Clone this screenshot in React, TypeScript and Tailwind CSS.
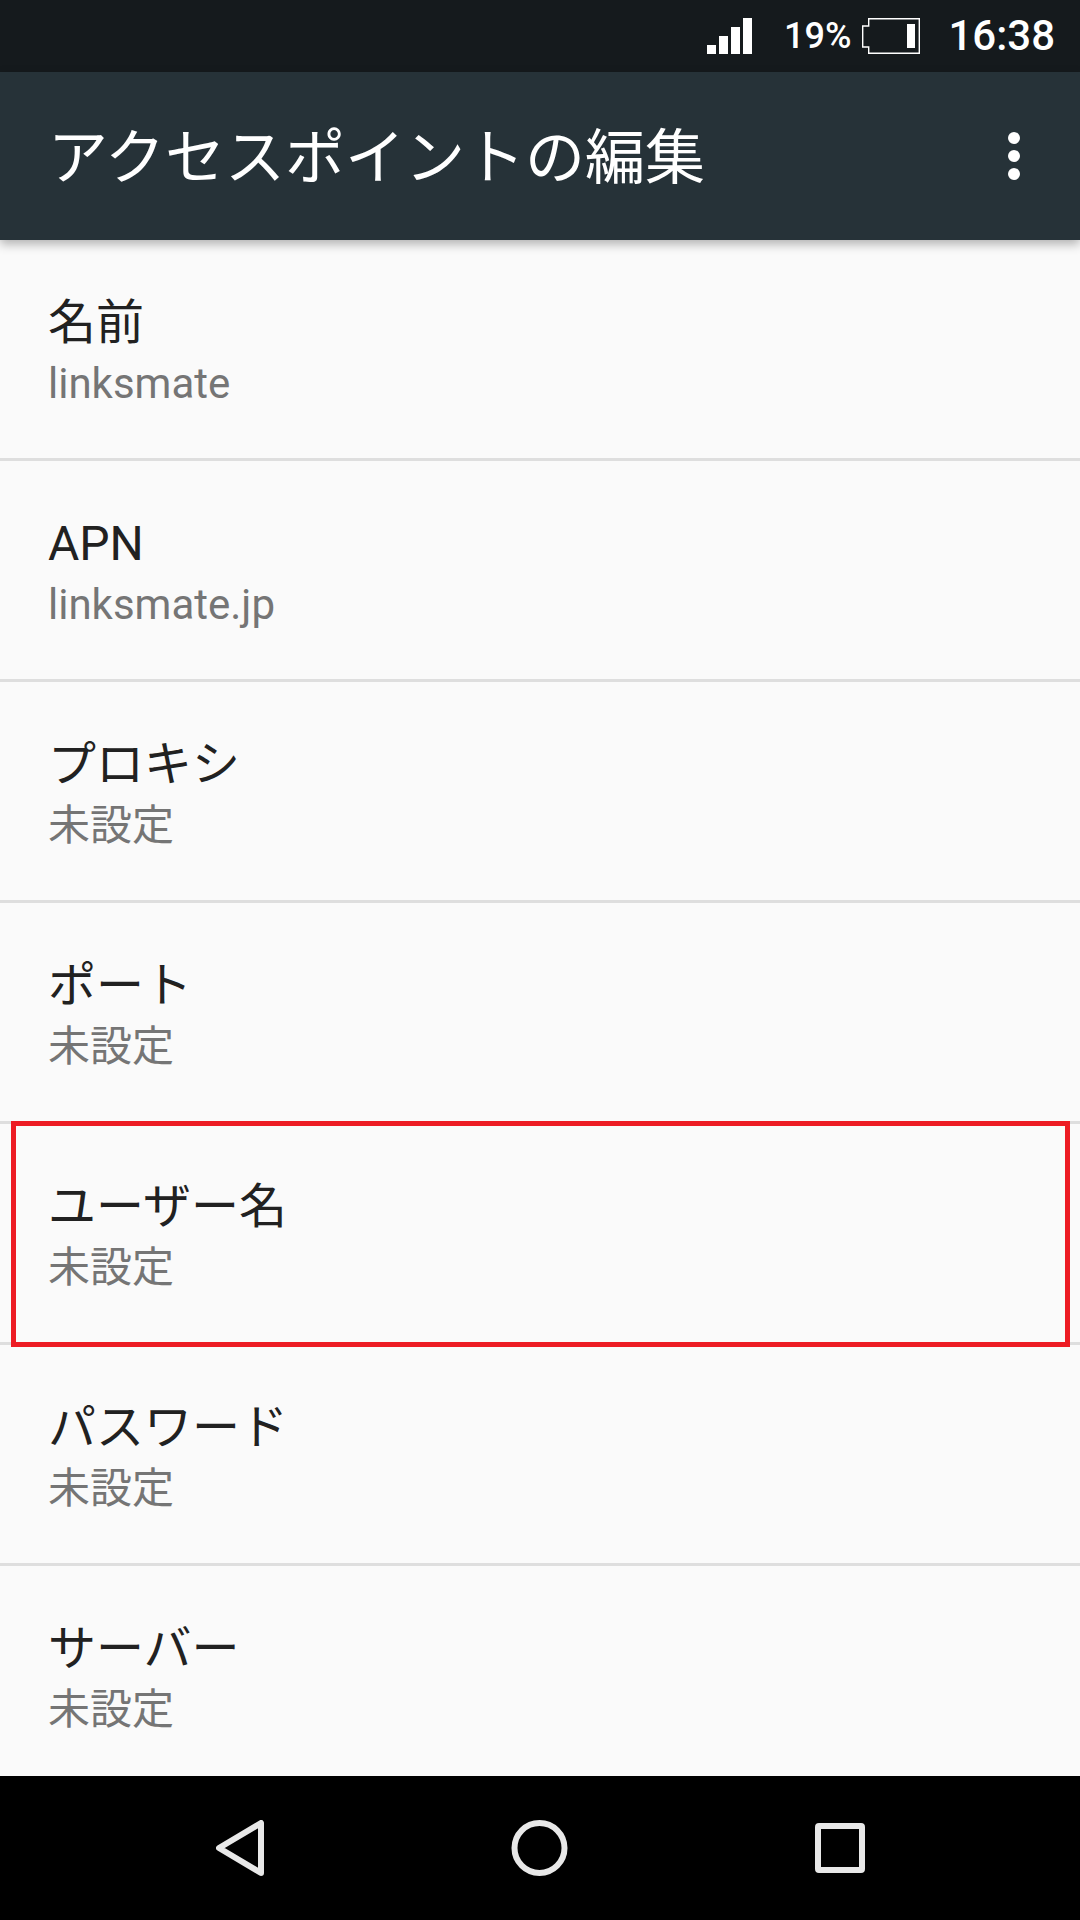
const font = { fontFamily: '"Roboto", "Noto Sans CJK JP", sans-serif' };

const rows = [
  ["名前", "linksmate"],
  ["APN", "linksmate.jp"],
  ["プロキシ", "未設定"],
  ["ポート", "未設定"],
  ["ユーザー名", "未設定"],
  ["パスワード", "未設定"],
  ["サーバー", "未設定"],
];

function Signal() {
  return (
    <svg width="45" height="36" viewBox="0 0 45 36" fill="#fff">
      <rect x="0" y="27" width="9" height="9" />
      <rect x="12" y="18" width="9" height="18" />
      <rect x="24" y="9" width="9" height="27" />
      <rect x="36" y="0" width="9" height="36" />
    </svg>
  );
}

function Battery() {
  return (
    <svg width="58" height="36" viewBox="0 0 58 36" fill="none">
      <path d="M6.7 .7H57.3V35.3H6.7V29H.7V8H6.7Z" stroke="#fff" strokeWidth="1.4" />
      <rect x="45" y="6" width="8" height="24" fill="#fff" />
    </svg>
  );
}

export default function App() {
  return (
    <div className="w-[1080px] h-[1920px] flex flex-col bg-[#fafafa] overflow-hidden" style={font}>
      <div className="h-[72px] shrink-0 bg-[#151a1d] flex items-center justify-end text-white">
        <Signal />
        <span className="ml-[32px] text-[36px] font-medium leading-none">19%</span>
        <span className="ml-[11px] flex"><Battery /></span>
        <span className="ml-[28px] mr-[25px] text-[42px] font-medium leading-none">16:38</span>
      </div>
      <div className="relative z-10 h-[168px] shrink-0 bg-[#263238] flex items-center justify-between pl-[48px] pr-[60px] shadow-[0_4px_10px_rgba(0,0,0,0.3)]">
        <span className="mt-[6px] text-[60px] leading-none text-white">アクセスポイントの編集</span>
        <span className="flex flex-col gap-[6px]">
          <span className="w-[12px] h-[12px] rounded-full bg-white" />
          <span className="w-[12px] h-[12px] rounded-full bg-white" />
          <span className="w-[12px] h-[12px] rounded-full bg-white" />
        </span>
      </div>
      <div className="relative flex-1 overflow-hidden">
        {rows.map(([title, value]) => (
          <div key={title} className="h-[221px] border-b-[3px] border-[#dedede] pl-[48px] pt-[53px] flex flex-col">
            <span className="text-[48px] leading-[60px] text-[#212121]">{title}</span>
            <span className="text-[42px] leading-[62px] text-[#757575]">{value}</span>
          </div>
        ))}
        <div className="absolute left-[11px] top-[881px] w-[1059px] h-[226px] border-[5px] border-[#ed1c24]" />
      </div>
      <div className="h-[144px] shrink-0 bg-black flex items-center relative">
        <svg className="absolute left-[216px] top-[44px]" width="48" height="56" viewBox="0 0 48 56" fill="none">
          <path d="M45 3V53L3 28Z" stroke="#e8e8e8" strokeWidth="6" strokeLinejoin="round" />
        </svg>
        <svg className="absolute left-[511px] top-[44px]" width="57" height="56" viewBox="0 0 57 56" fill="none">
          <circle cx="28.5" cy="28" r="25" stroke="#e8e8e8" strokeWidth="6" />
        </svg>
        <svg className="absolute left-[815px] top-[47px]" width="50" height="50" viewBox="0 0 50 50" fill="none">
          <rect x="3" y="3" width="44" height="44" rx="1" stroke="#e8e8e8" strokeWidth="6" />
        </svg>
      </div>
    </div>
  );
}
